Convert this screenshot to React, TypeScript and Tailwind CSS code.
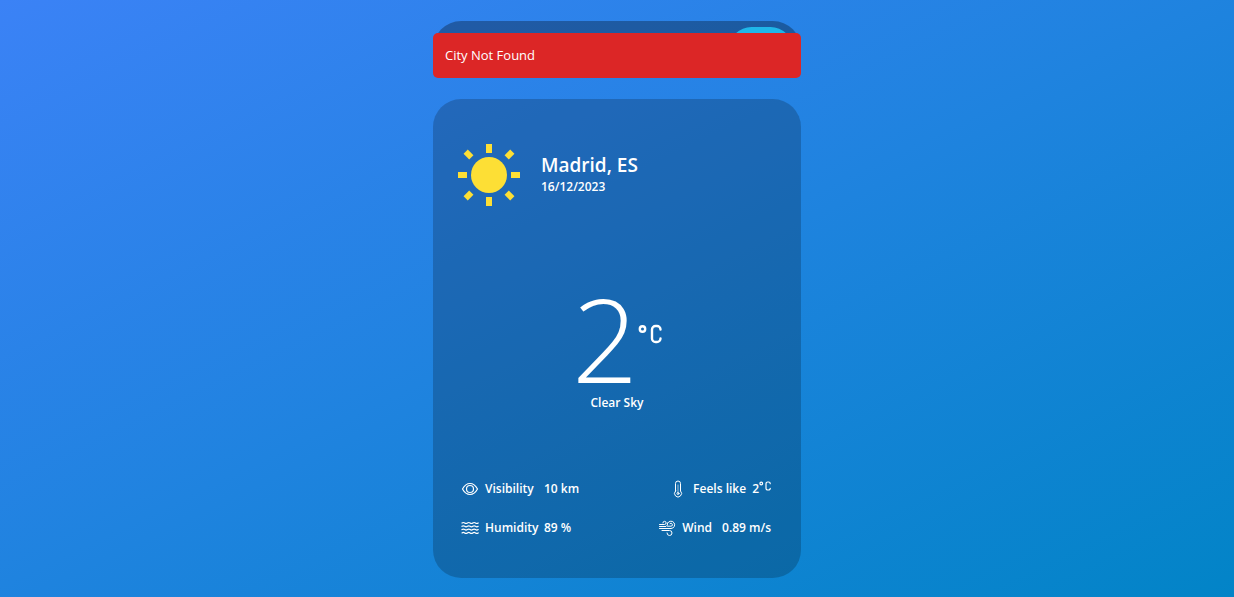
import type { ReactNode } from "react";

const line = { fill: "none", stroke: "currentColor", strokeLinecap: "round", strokeLinejoin: "round" } as const;

function SunIcon() {
  return (
    <svg viewBox="0 0 64 64" className="size-16 shrink-0" fill="#fddf35" aria-hidden="true">
      <circle cx="32" cy="32" r="18" />
      {[0, 45, 90, 135, 180, 225, 270, 315].map((a) => (
        <rect key={a} x="29" y={a % 90 ? -1 : 1} width="6" height={a % 90 ? 8 : 9} transform={`rotate(${a} 32 32)`} />
      ))}
    </svg>
  );
}

function CelsiusIcon({ className }: { className: string }) {
  return (
    <svg viewBox="0 0 24 20" className={className} strokeWidth="2.400" {...line} role="img" aria-label="degrees Celsius">
      <circle cx="4.500" cy="5" r="2.700" />
      <path d="M22.500 5.500a3.500 3.500 0 0 0-3.500-3.500h-1.500a3.500 3.500 0 0 0-3.500 3.500v9a3.500 3.500 0 0 0 3.500 3.500h1.500a3.500 3.500 0 0 0 3.500-3.500" />
    </svg>
  );
}

function EyeIcon() {
  return (
    <svg viewBox="0 0 18 18" className="size-[18px]" strokeWidth="1.200" {...line} aria-hidden="true">
      <path d="M1.500 9c2-3.700 4.700-5.500 7.500-5.500s5.500 1.800 7.500 5.500c-2 3.700-4.700 5.500-7.500 5.500S3.500 12.700 1.500 9z" />
      <circle cx="9" cy="9" r="3.500" />
    </svg>
  );
}

function WavesIcon() {
  return (
    <svg viewBox="0 0 18 18" className="size-[18px]" strokeWidth="1.200" {...line} aria-hidden="true">
      {[4, 7.3, 10.6, 13.9].map((y) => (
        <path key={y} d={`M1 ${y}q1.350 -1 2.700 0t2.700 0t2.700 0t2.700 0t2.700 0t2.700 0`} />
      ))}
    </svg>
  );
}

function ThermometerIcon() {
  return (
    <svg viewBox="0 0 18 18" className="size-[18px]" strokeWidth="1" {...line} aria-hidden="true">
      <path d="M6.500 11V3.500a2.500 2.500 0 0 1 5 0v7.500a3.500 3.500 0 1 1-5 0z" />
      <path d="M9 5v7.500" opacity="0.600" />
      <circle cx="9" cy="13.500" r="1" />
    </svg>
  );
}

function WindIcon() {
  return (
    <svg viewBox="0 0 18 18" className="size-[18px]" strokeWidth="1" {...line} aria-hidden="true">
      <path d="M1.500 5.500h5a1.600 1.600 0 1 0-1.600-1.600" />
      <path d="M1.500 7.500h6.500a3 3 0 0 0 1.500-3.500" />
      <path d="M1.500 9.500h11.500a3.700 3.700 0 1 0-3.300-5.500M12 4.500a1.500 1.500 0 1 1 1 2.700H9.500" />
      <path d="M4 11.500h7.500a2.500 2.500 0 1 1-2.500 2.500" />
    </svg>
  );
}

type DetailProps = { icon: ReactNode; label: string; labelClass?: string; children: ReactNode };

function Detail({ icon, label, labelClass, children }: DetailProps) {
  return (
    <div className="flex items-center gap-1.5">
      {icon}
      <dt className={labelClass}>{label}</dt>
      <dd className="flex">{children}</dd>
    </div>
  );
}

export default function App() {
  return (
    <main className="flex min-h-screen flex-col items-center bg-[linear-gradient(to_bottom_right,#3b82f6,#0284c7)] px-4 pt-[21px] pb-[19px] font-['Open_Sans',sans-serif] text-white">
      <div className="relative w-full max-w-[368px]">
        <form className="flex h-[57px] justify-end rounded-[28px] bg-black/30 px-2 py-1.5" onSubmit={(e) => e.preventDefault()}>
          <input aria-label="City" className="min-w-0 flex-1 bg-transparent px-4 outline-none" />
          <button aria-label="Search" className="w-16 rounded-3xl bg-[#1fb6e9]" />
        </form>
        <div role="alert" className="absolute inset-x-0 top-3 rounded-[5px] bg-[#dc2626] px-3 py-3 text-[13px] leading-[21px]">
          City Not Found
        </div>
      </div>

      <section className="mt-[21px] w-full max-w-[368px] rounded-[28px] bg-black/20 px-6 pt-11 pb-10 text-[12px] leading-5 font-semibold">
        <header className="flex items-center gap-5">
          <SunIcon />
          <div>
            <h1 className="text-[19px] leading-6">Madrid, ES</h1>
            <p>16/12/2023</p>
          </div>
        </header>

        <div className="mt-[78px] flex flex-col items-center gap-0.5">
          <div className="flex items-center">
            <span className="text-[116px] leading-[106px] font-light">2</span>
            <CelsiusIcon className="mb-2 h-5 w-6" />
          </div>
          <p>Clear Sky</p>
        </div>

        <dl className="mt-[66px] flex justify-between pr-1.5 pl-1">
          <div className="flex flex-col gap-[19px]">
            <Detail icon={<EyeIcon />} label="Visibility" labelClass="w-[53px]">10 km</Detail>
            <Detail icon={<WavesIcon />} label="Humidity" labelClass="w-[53px]">89 %</Detail>
          </div>
          <div className="flex flex-col items-end gap-[19px]">
            <Detail icon={<ThermometerIcon />} label="Feels like">
              2<CelsiusIcon className="mt-0.5 h-2.5 w-3" />
            </Detail>
            <Detail icon={<WindIcon />} label="Wind" labelClass="pr-1">0.89 m/s</Detail>
          </div>
        </dl>
      </section>
    </main>
  );
}
